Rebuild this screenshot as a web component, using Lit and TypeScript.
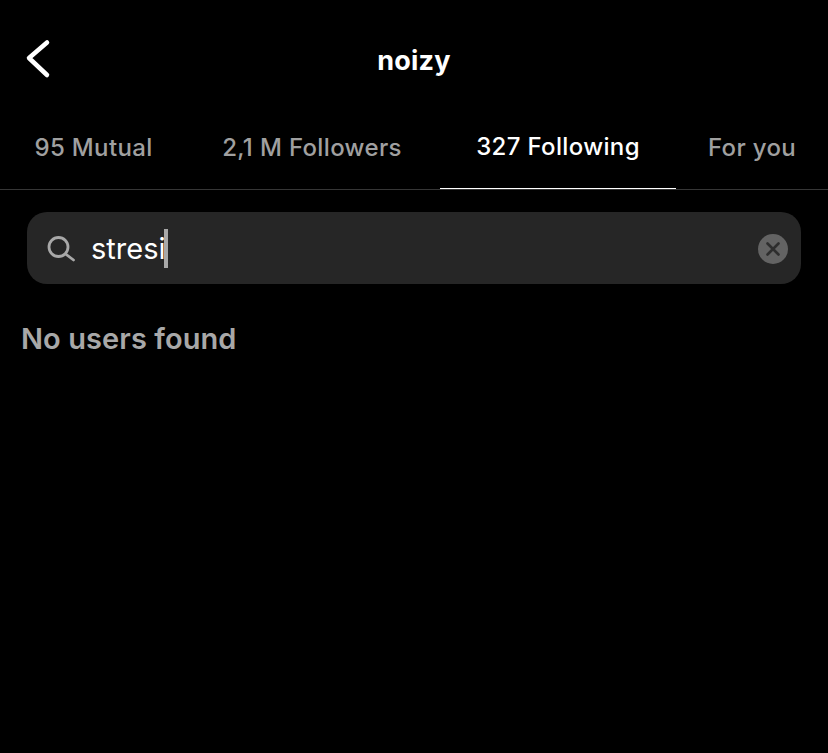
import { css, html, LitElement } from "lit";
import { customElement } from "lit/decorators.js";
import { classMap } from "lit/directives/class-map.js";

const TABS = [
  { label: "95 Mutual", active: false },
  { label: "2,1 M Followers", active: false },
  { label: "327 Following", active: true },
  { label: "For you", active: false },
];

@customElement("app-root")
export class AppRoot extends LitElement {
  static styles = css`
    :host {
      display: block;
      height: 753px;
      background: #000;
      color: #fff;
      font-family: Inter, "Liberation Sans", sans-serif;
      overflow: hidden;
    }

    .header {
      height: 120px;
      box-sizing: border-box;
      padding-top: 1px;
      position: relative;
      display: flex;
      align-items: center;
      justify-content: center;
    }

    .back {
      position: absolute;
      left: 25px;
      top: 38px;
      width: 26px;
      height: 42px;
    }

    .title {
      font-size: 27px;
      font-weight: 700;
      line-height: 32px;
      letter-spacing: 0.2px;
    }

    .tabs {
      display: grid;
      grid-template-columns: 187px 250px 239px 152px;
      height: 69px;
      border-bottom: 1px solid #363636;
      box-sizing: content-box;
    }

    .tab {
      display: flex;
      align-items: center;
      justify-content: center;
      padding-bottom: 15px;
      font-size: 24px;
      font-weight: 500;
      color: #a0a0a0;
      letter-spacing: 0.35px;
      white-space: nowrap;
      box-sizing: border-box;
    }

    .tab.active {
      margin-left: 3px;
      color: #fff;
      border-bottom: 1px solid #fff;
    }

    .search {
      margin: 22px 27px 0;
      height: 72px;
      border-radius: 20px;
      background: #262626;
      display: flex;
      align-items: center;
      padding: 0 13px 0 19px;
    }

    .search-icon {
      width: 30px;
      height: 30px;
      flex: none;
    }

    .query {
      margin-left: 15px;
      font-size: 29px;
      line-height: 39px;
      flex: 1;
      display: flex;
      align-items: center;
    }

    .caret {
      width: 4px;
      height: 39px;
      background: #a8a8a8;
      margin-left: -1px;
    }

    .clear {
      width: 30px;
      height: 30px;
      flex: none;
      margin-top: 1px;
    }

    .empty {
      margin: 37px 0 0 21px;
      font-size: 29px;
      line-height: 36px;
      font-weight: 600;
      letter-spacing: 0.08px;
      color: #a8a8a8;
    }
  `;

  render() {
    return html`
      <div class="header">
        <svg class="back" viewBox="0 0 26 42" fill="none">
          <path
            d="M22 4.5 L4 20 L22 37"
            stroke="#fff"
            stroke-width="4.5"
            stroke-linecap="round"
            stroke-linejoin="round"
          />
        </svg>
        <div class="title">noizy</div>
      </div>
      <div class="tabs">
        ${TABS.map(
          (tab) => html`
            <div class=${classMap({ tab: true, active: tab.active })}>
              ${tab.label}
            </div>
          `
        )}
      </div>
      <div class="search">
        <svg class="search-icon" viewBox="0 0 30 30" fill="none">
          <circle cx="12.5" cy="14" r="9.5" stroke="#a8a8a8" stroke-width="2.8" />
          <path
            d="M19.5 21 L27.5 27"
            stroke="#a8a8a8"
            stroke-width="2.8"
            stroke-linecap="round"
          />
        </svg>
        <div class="query">stresi<span class="caret"></span></div>
        <svg class="clear" viewBox="0 0 30 30" fill="none">
          <circle cx="15" cy="15" r="15" fill="#636363" />
          <path
            d="M9.5 9.5 L20.5 20.5 M20.5 9.5 L9.5 20.5"
            stroke="#2e2e2e"
            stroke-width="2.6"
            stroke-linecap="round"
          />
        </svg>
      </div>
      <div class="empty">No users found</div>
    `;
  }
}
